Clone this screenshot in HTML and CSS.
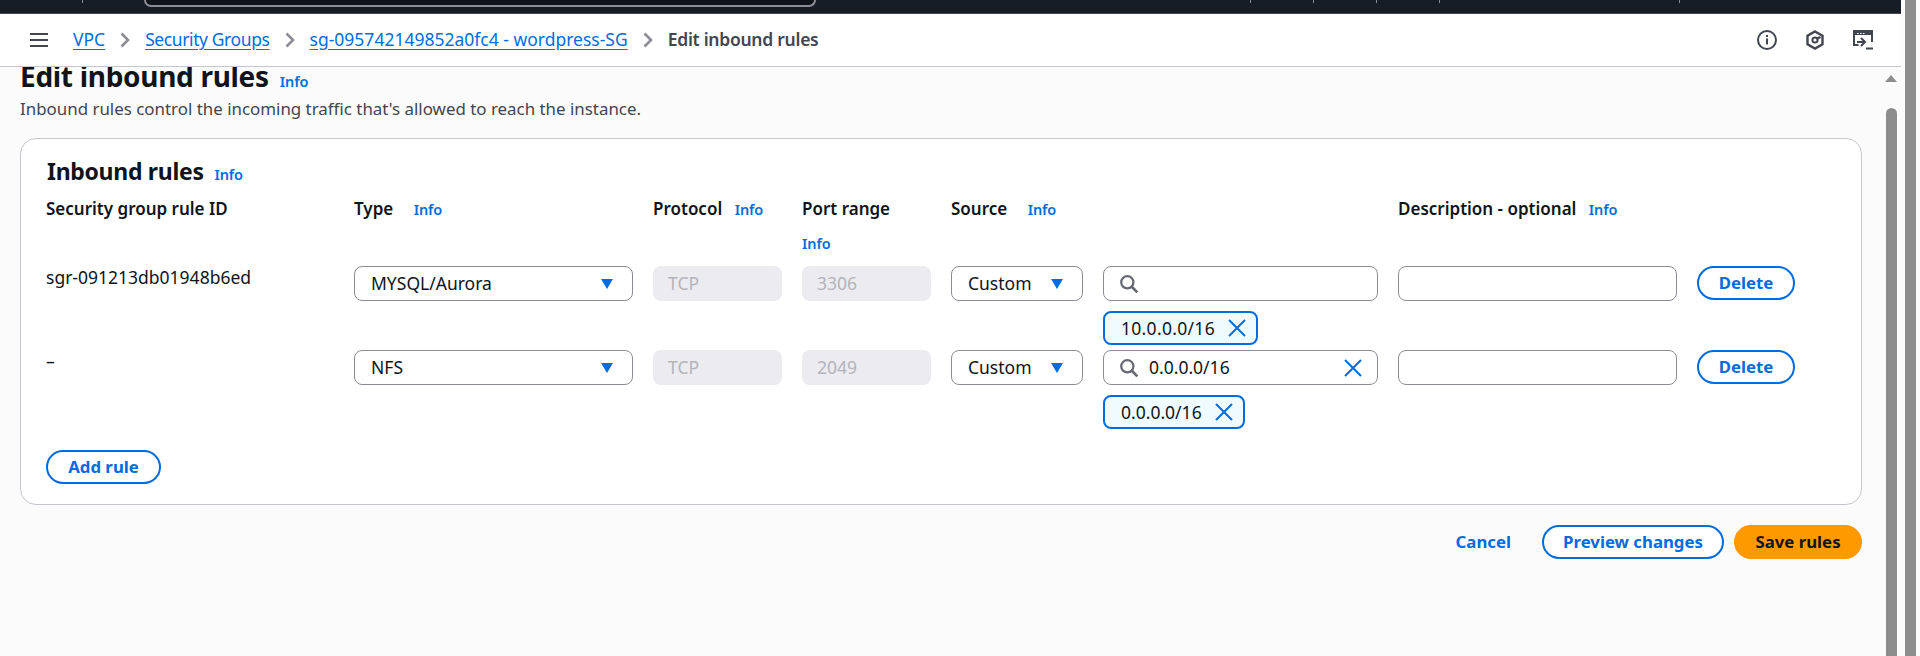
FILE: index.html
```html
<!DOCTYPE html>
<html lang="en">
<head>
<meta charset="utf-8">
<title>Edit inbound rules</title>
<link rel="stylesheet" href="styles.css">
</head>
<body>
<div class="window">
  <div class="main">
    <div class="topbar">
      <span class="tick tick-a"></span>
      <span class="search"></span>
      <span class="tick tick-b"></span>
      <span class="tick tick-c"></span>
      <span class="tick tick-c"></span>
      <span class="tick tick-c"></span>
      <span class="tick tick-d"></span>
    </div>
    <header class="crumbbar">
      <svg class="menu" width="18" height="16" viewBox="0 0 18 16"><path d="M0 2h18M0 8h18M0 14h18" stroke="#424650" stroke-width="2" fill="none"/></svg>
      <a class="crumb">VPC</a>
      <svg class="chev" width="10" height="16" viewBox="0 0 10 16"><path d="M1.500 1.500 8 8l-6.500 6.500" stroke="#8c8c94" stroke-width="2.600" fill="none"/></svg>
      <a class="crumb crumb-tight">Security Groups</a>
      <svg class="chev" width="10" height="16" viewBox="0 0 10 16"><path d="M1.500 1.500 8 8l-6.500 6.500" stroke="#8c8c94" stroke-width="2.600" fill="none"/></svg>
      <a class="crumb">sg-095742149852a0fc4 - wordpress-SG</a>
      <svg class="chev" width="10" height="16" viewBox="0 0 10 16"><path d="M1.500 1.500 8 8l-6.500 6.500" stroke="#8c8c94" stroke-width="2.600" fill="none"/></svg>
      <span class="crumb-current">Edit inbound rules</span>
      <div class="tools">
        <svg width="20" height="20" viewBox="0 0 20 20"><circle cx="10" cy="10" r="9" fill="none" stroke="#424650" stroke-width="2"/><path d="M10 8.500v6" stroke="#424650" stroke-width="2"/><path d="M10 5v2" stroke="#424650" stroke-width="2"/></svg>
        <svg width="20" height="20" viewBox="0 0 20 20"><path d="M10 1.500 17.500 5.700v8.600L10 18.500 2.500 14.300V5.700z" fill="none" stroke="#424650" stroke-width="2.400"/><circle cx="10" cy="10" r="2.600" fill="none" stroke="#424650" stroke-width="2"/><path d="m11.500 8.800 4 -1.800" stroke="#424650" stroke-width="2.400"/></svg>
        <svg width="20" height="20" viewBox="0 0 20 20"><path d="M5.500 15H1V1h18v11" fill="none" stroke="#424650" stroke-width="2"/><path d="M1 3.500h18" stroke="#424650" stroke-width="3"/><path d="M4 3.500h1.500M7 3.500h1.500M10 3.500h1.500" stroke="#fff" stroke-width="1.200"/><path d="M4 12h7M8 8l4 4-4 4" fill="none" stroke="#424650" stroke-width="2"/><path d="M13 18.500h7" stroke="#424650" stroke-width="2"/></svg>
      </div>
    </header>
    <main class="content">
      <div class="inner-scroll">
        <span class="scroll-up"></span>
        <span class="scroll-thumb"></span>
      </div>
      <h1 class="page-title">Edit inbound rules <a class="info">Info</a></h1>
      <p class="page-desc">Inbound rules control the incoming traffic that's allowed to reach the instance.</p>
      <section class="card">
        <h2 class="card-title">Inbound rules <a class="info">Info</a></h2>
        <div class="rules">
          <div class="head">Security group rule ID</div>
          <div class="head head-wide">Type <a class="info">Info</a></div>
          <div class="head">Protocol <a class="info">Info</a></div>
          <div class="head head-stack">Port range <a class="info">Info</a></div>
          <div class="head head-wide head-source">Source <a class="info">Info</a></div>
          <div class="head">Description - optional <a class="info">Info</a></div>
          <div></div>

          <div class="rule-id">sgr-091213db01948b6ed</div>
          <div class="select select-type">MYSQL/Aurora<span class="caret"></span></div>
          <div class="field-off">TCP</div>
          <div class="field-off">3306</div>
          <div class="select">Custom<span class="caret"></span></div>
          <div class="source-cell">
            <div class="field">
              <svg class="lens" width="20" height="20" viewBox="0 0 18 18"><circle cx="7.500" cy="7.500" r="5.500" fill="none" stroke="#656871" stroke-width="2"/><path d="m11.500 11.500 5 5" stroke="#656871" stroke-width="2.400"/></svg>
            </div>
            <div class="token token-long"><span>10.0.0.0/16</span><svg class="x" width="18" height="18" viewBox="0 0 18 18"><path d="m1 1 16 16m0-16-16 16" stroke="#006ce0" stroke-width="2" fill="none"/></svg></div>
          </div>
          <div class="field"></div>
          <button class="btn btn-row">Delete</button>

          <div class="rule-id">–</div>
          <div class="select select-type">NFS<span class="caret"></span></div>
          <div class="field-off">TCP</div>
          <div class="field-off">2049</div>
          <div class="select">Custom<span class="caret"></span></div>
          <div class="source-cell">
            <div class="field">
              <svg class="lens" width="20" height="20" viewBox="0 0 18 18"><circle cx="7.500" cy="7.500" r="5.500" fill="none" stroke="#656871" stroke-width="2"/><path d="m11.500 11.500 5 5" stroke="#656871" stroke-width="2.400"/></svg>
              <span class="field-value">0.0.0.0/16</span>
              <svg class="x x-end" width="18" height="18" viewBox="0 0 18 18"><path d="m1 1 16 16m0-16-16 16" stroke="#006ce0" stroke-width="2" fill="none"/></svg>
            </div>
            <div class="token"><span>0.0.0.0/16</span><svg class="x" width="18" height="18" viewBox="0 0 18 18"><path d="m1 1 16 16m0-16-16 16" stroke="#006ce0" stroke-width="2" fill="none"/></svg></div>
          </div>
          <div class="field"></div>
          <button class="btn btn-row">Delete</button>
        </div>
        <button class="btn btn-add">Add rule</button>
      </section>
      <div class="actions">
        <a class="cancel">Cancel</a>
        <button class="btn btn-preview">Preview changes</button>
        <button class="btn btn-save">Save rules</button>
      </div>
    </main>
  </div>
  <div class="page-scroll"><span class="page-thumb"></span></div>
</div>
</body>
</html>
```

FILE: styles.css
```css
* { box-sizing: border-box; }
html, body { margin: 0; height: 100%; overflow: hidden; background: #fff; }
body { font-family: "Noto Sans", "Open Sans", sans-serif; font-size: 17px; line-height: 20px; color: #0f141a; }
.window { display: flex; height: 656px; }
.main { width: 1901px; display: flex; flex-direction: column; }

.topbar { height: 14px; flex: none; background: #161d26; border-bottom: 1px solid #424650; display: flex; align-items: flex-start; }
.tick { width: 1px; height: 3px; background: #8c8c94; flex: none; }
.tick-a { margin-left: 82px; }
.search { width: 672px; height: 7px; margin-left: 61px; flex: none; background: #0f141a; border: 2px solid #8c8c94; border-top: 0; border-radius: 0 0 8px 8px; }
.tick-b { margin-left: 434px; }
.tick-c { margin-left: 62px; }
.tick-d { margin-left: 239px; }

.crumbbar { height: 53px; flex: none; background: #fff; border-bottom: 1px solid #c6c6cd; display: flex; align-items: center; padding-left: 30px; }
.menu { margin-right: 25px; flex: none; }
.crumb { color: #006ce0; text-decoration: underline; text-underline-offset: 3px; font-size: 17.500px; white-space: nowrap; margin-bottom: 2px; }
.crumb-tight { letter-spacing: -0.400px; }
.chev { margin: 0 15px; flex: none; }
.crumb-current { color: #424650; font-weight: 600; font-size: 17.500px; letter-spacing: -0.270px; white-space: nowrap; margin-bottom: 2px; }
.tools { margin-left: auto; display: flex; gap: 28px; padding-right: 28px; }

.content { position: relative; flex: 1; background: #fbfbfb; overflow: hidden; padding: 0 39px 0 20px; }
.page-title { margin: -8px 0 0; font-size: 28px; line-height: 34px; font-weight: 700; letter-spacing: -0.300px; }
.page-desc { margin: 6px 0 0; color: #424650; font-size: 16.900px; line-height: 20px; }
.info { color: #006ce0; font-size: 14.500px; font-weight: 600; line-height: 1; letter-spacing: -0.100px; margin-left: 4px; }

.card { margin-top: 19px; height: 367px; background: #fff; border: 1px solid #c6c6cd; border-radius: 16px; padding: 19px 25px 0; }
.card-title { margin: 0 0 0 1px; font-size: 23px; line-height: 26px; font-weight: 700; letter-spacing: -0.300px; }
.card-title .info { margin-left: 5px; }

.rules { display: grid; grid-template-columns: 288px 279px 129px 129px 132px 275px 279px 98px; column-gap: 20px; margin-top: 15px; align-items: start; }
.head { font-weight: 600; font-size: 17px; height: 67px; white-space: nowrap; }
.head .info { margin-left: 8px; }
.head-wide .info { margin-left: 16px; }
.head-stack .info { display: block; margin: 17px 0 0; }
.head-source { grid-column: span 2; }

.rule-id { font-size: 17.500px; height: 84px; padding-top: 1px; white-space: nowrap; }
.select { height: 35px; background: #fff; border: 1px solid #8c8c94; border-radius: 8px; display: flex; align-items: center; justify-content: space-between; padding: 0 19px 2px 16px; font-size: 17.500px; }
.caret { width: 0; height: 0; border-left: 6.500px solid transparent; border-right: 6.500px solid transparent; border-top: 10px solid #006ce0; margin-top: 2px; }
.field-off { height: 35px; background: #ebebf0; border-radius: 8px; display: flex; align-items: center; padding: 0 15px 2px; color: #b4b4bb; font-size: 17.500px; }
.field { height: 35px; background: #fff; border: 1px solid #8c8c94; border-radius: 8px; display: flex; align-items: center; padding: 0 15px; font-size: 17.500px; }
.field-value { margin-bottom: 2px; }
.lens { flex: none; margin-right: 10px; }
.x-end { margin-left: auto; flex: none; }
.token { display: inline-flex; align-items: center; height: 34px; margin-top: 10px; background: #f0fbff; border: 2px solid #006ce0; border-radius: 8px; padding: 0 10px 0 16px; gap: 13px; font-size: 17.500px; }
.token-long { letter-spacing: 0.300px; }
.x { flex: none; }

.btn { font: inherit; font-weight: 700; font-size: 16.800px; color: #006ce0; background: #fff; border: 2px solid #006ce0; border-radius: 20px; height: 34px; padding: 0; }
.btn-row { width: 98px; }
.btn-add { width: 115px; margin-top: 16px; display: block; }
.actions { display: flex; justify-content: flex-end; align-items: center; margin-top: 20px; }
.cancel { color: #006ce0; font-weight: 700; font-size: 16.800px; margin-right: 31px; }
.btn-preview { width: 182px; margin-right: 10px; }
.btn-save { width: 128px; background: #ff9900; border-color: #ff9900; color: #0f141a; }

.inner-scroll { position: absolute; top: 0; right: 4px; bottom: 0; width: 11px; }
.scroll-up { position: absolute; top: 8px; left: -1px; width: 0; height: 0; border-left: 6.500px solid transparent; border-right: 6.500px solid transparent; border-bottom: 7px solid #8d8d8d; }
.scroll-thumb { position: absolute; top: 41px; bottom: 0; left: 0; width: 11px; background: #8d8d8d; border-radius: 6px 6px 0 0; }

.page-scroll { flex: 1; background: #fbfbfb; padding-left: 4px; }
.page-thumb { display: block; width: 11px; height: 100%; background: #8d8d8d; }
```
